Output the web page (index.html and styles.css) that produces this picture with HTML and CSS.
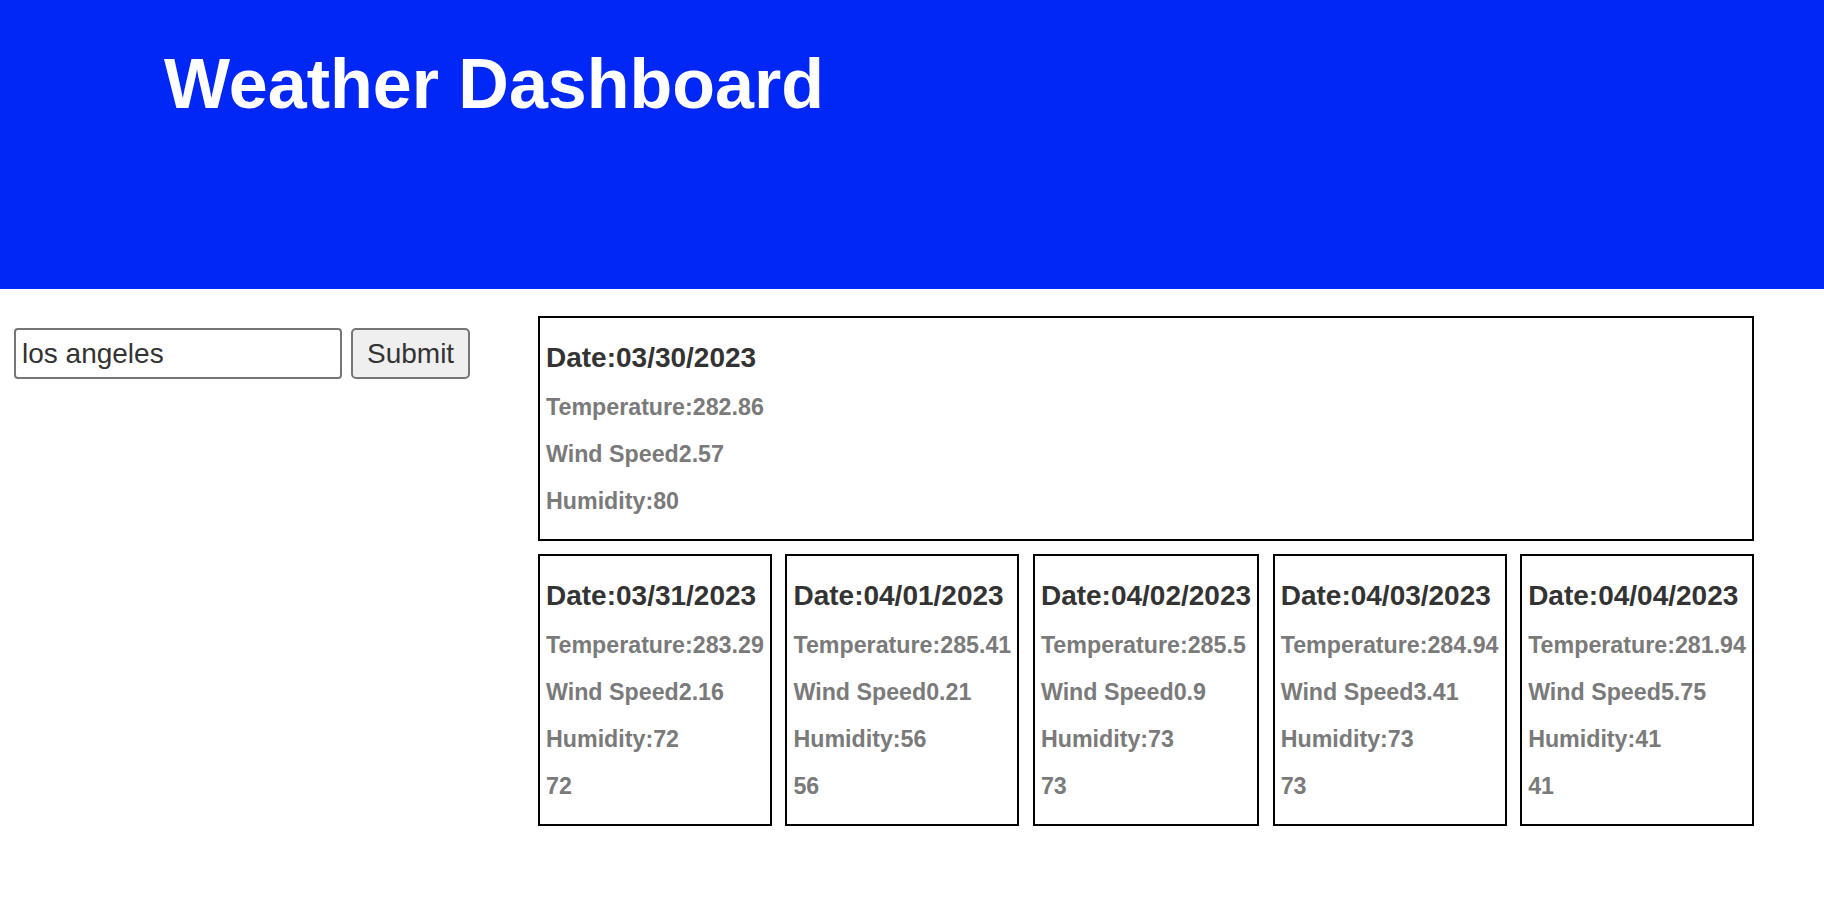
FILE: index.html
```html
<!DOCTYPE html>
<html lang="en">
<head>
<meta charset="utf-8">
<title>Weather Dashboard</title>
<link rel="stylesheet" href="styles.css">
</head>
<body>
<header class="top">
  <h1 class="title">Weather Dashboard</h1>
</header>
<main class="layout">
  <aside class="search">
    <form class="search-form">
      <input class="city-input" type="text" value="los angeles">
      <button class="submit-btn" type="button">Submit</button>
    </form>
  </aside>
  <section class="results">
    <div class="card current">
      <h4 class="date">Date:03/30/2023</h4>
      <h5 class="stat">Temperature:282.86</h5>
      <h5 class="stat">Wind Speed2.57</h5>
      <h5 class="stat">Humidity:80</h5>
    </div>
    <div class="forecast">
      <div class="card">
        <h4 class="date">Date:03/31/2023</h4>
        <h5 class="stat">Temperature:283.29</h5>
        <h5 class="stat">Wind Speed2.16</h5>
        <h5 class="stat">Humidity:72</h5>
        <h5 class="stat">72</h5>
      </div>
      <div class="card">
        <h4 class="date">Date:04/01/2023</h4>
        <h5 class="stat">Temperature:285.41</h5>
        <h5 class="stat">Wind Speed0.21</h5>
        <h5 class="stat">Humidity:56</h5>
        <h5 class="stat">56</h5>
      </div>
      <div class="card">
        <h4 class="date">Date:04/02/2023</h4>
        <h5 class="stat">Temperature:285.5</h5>
        <h5 class="stat">Wind Speed0.9</h5>
        <h5 class="stat">Humidity:73</h5>
        <h5 class="stat">73</h5>
      </div>
      <div class="card">
        <h4 class="date">Date:04/03/2023</h4>
        <h5 class="stat">Temperature:284.94</h5>
        <h5 class="stat">Wind Speed3.41</h5>
        <h5 class="stat">Humidity:73</h5>
        <h5 class="stat">73</h5>
      </div>
      <div class="card">
        <h4 class="date">Date:04/04/2023</h4>
        <h5 class="stat">Temperature:281.94</h5>
        <h5 class="stat">Wind Speed5.75</h5>
        <h5 class="stat">Humidity:41</h5>
        <h5 class="stat">41</h5>
      </div>
    </div>
  </section>
</main>
</body>
</html>
```
FILE: styles.css
```css
* {
  box-sizing: border-box;
}

body {
  margin: 0;
  font-family: "Liberation Sans", Arial, Helvetica, sans-serif;
  background: #ffffff;
  color: #333333;
}

.top {
  height: 289px;
  background: #0027f6;
  padding: 44px 0 0 164px;
}

.title {
  margin: 0;
  font-size: 70px;
  font-weight: bold;
  line-height: normal;
  color: #ffffff;
}

.layout {
  display: flex;
  padding: 27px 70px 0 14px;
}

.search {
  width: 524px;
  flex: 0 0 524px;
  padding-top: 12px;
}

.search-form {
  display: flex;
  gap: 9px;
  margin: 0;
}

.city-input {
  width: 328px;
  height: 51px;
  margin: 0;
  padding: 0 6px;
  border: 2px solid #767676;
  border-radius: 4px;
  font-family: "Liberation Sans", Arial, sans-serif;
  font-size: 28px;
  color: #333333;
  background: #ffffff;
}

.submit-btn {
  height: 51px;
  margin: 0;
  padding: 0 14px;
  border: 2px solid #767676;
  border-radius: 5px;
  background: #efefef;
  font-family: "Liberation Sans", Arial, sans-serif;
  font-size: 28px;
  color: #333333;
}

.results {
  flex: 1 1 auto;
  display: flex;
  flex-direction: column;
  gap: 13px;
}

.card {
  border: 2px solid #000000;
  padding: 24px 6px;
  display: flex;
  flex-direction: column;
  gap: 20px;
  white-space: nowrap;
}

.forecast {
  display: flex;
  justify-content: space-between;
}

.forecast .card {
  flex: 0 0 auto;
}

.date {
  margin: 0;
  font-size: 28px;
  font-weight: bold;
  line-height: normal;
  color: #333333;
}

.stat {
  margin: 0;
  font-size: 23.24px;
  font-weight: bold;
  line-height: normal;
  color: #7a7a7a;
}
```
